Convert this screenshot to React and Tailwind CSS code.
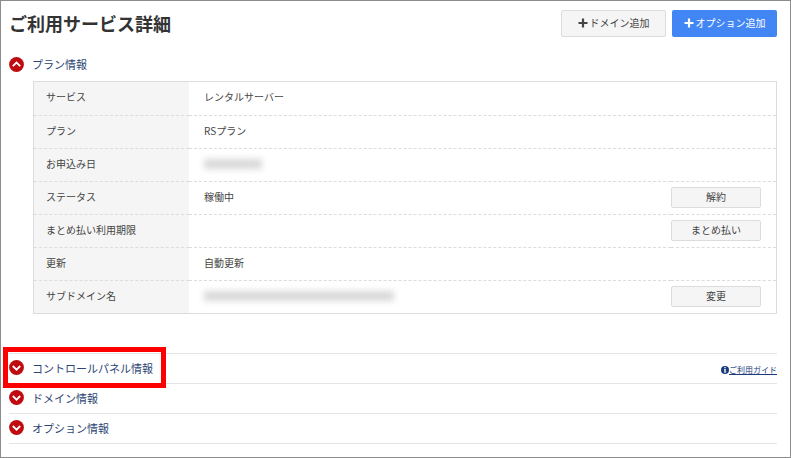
import React from "react";

const planRows = [
  { label: "サービス", value: "レンタルサーバー" },
  { label: "プラン", value: "RSプラン" },
  { label: "お申込み日", masked: "date" },
  { label: "ステータス", value: "稼働中", action: "解約" },
  { label: "まとめ払い利用期限", value: "", action: "まとめ払い" },
  { label: "更新", value: "自動更新" },
  { label: "サブドメイン名", masked: "domain", action: "変更" },
];

const ChevronBadge = ({ open }) => (
  <svg viewBox="0 0 15 15" className="w-[15px] h-[15px] shrink-0" aria-hidden="true">
    <circle cx="7.5" cy="7.5" r="7.4" fill="#bf0a10" />
    <path
      d={open ? "M3.8 9.2 7.5 5.5l3.7 3.7" : "M3.8 6 7.5 9.7 11.2 6"}
      fill="none"
      stroke="#fff"
      strokeWidth="1.8"
    />
  </svg>
);

const PlusIcon = () => (
  <svg viewBox="0 0 10 10" className="w-[10px] h-[10px] shrink-0" aria-hidden="true">
    <path d="M5 .5v9M.5 5h9" stroke="currentColor" strokeWidth="2.2" />
  </svg>
);

const InfoIcon = () => (
  <svg viewBox="0 0 8 8" className="w-2 h-2 shrink-0" aria-hidden="true">
    <circle cx="4" cy="4" r="4" fill="#1b3a7a" />
    <path d="M3.4 1.1h1.3v1.1H3.4zM3 3h1.7v2.8h.5v.8H2.9v-.8h.5v-2H3z" fill="#fff" />
  </svg>
);

const SectionToggle = ({ title, open = false }) => (
  <button
    type="button"
    aria-expanded={open}
    className="flex items-center gap-2 text-[11px] leading-4 text-[#2c4474] cursor-pointer"
  >
    <ChevronBadge open={open} />
    {title}
  </button>
);

// Private values are shown as a smudge
const MaskedValue = ({ kind }) => (
  <div
    className={
      kind === "date"
        ? "w-[58px] h-[10px] bg-[#d9d9d9] blur-[3px]"
        : "w-[190px] h-[10px] bg-[#d9d9d9] blur-[3px]"
    }
  />
);

const App = () => {
  return (
    <div className="min-h-screen border border-[#8c8c8c] bg-white pl-2 pr-[13px] pt-[9px] pb-[13px] text-[10px] leading-4 text-[#444] font-['Noto_Sans_CJK_JP','Liberation_Sans',sans-serif]">
      <header className="flex items-center justify-between">
        <h1 className="text-[18px] leading-[27px] font-bold text-[#333]">
          ご利用サービス詳細
        </h1>
        <div className="flex gap-[6px]">
          <button
            type="button"
            className="flex items-center justify-center gap-[2px] w-[105px] h-[27px] pb-[2px] rounded-xs border border-[#dcdcdc] bg-[#f5f5f5] cursor-pointer"
          >
            <PlusIcon />
            ドメイン追加
          </button>
          <button
            type="button"
            className="flex items-center justify-center gap-[2px] w-[105px] h-[27px] pb-[2px] rounded-xs bg-[#4285f4] text-white cursor-pointer"
          >
            <PlusIcon />
            オプション追加
          </button>
        </div>
      </header>

      <section className="mt-[19px]">
        <h2>
          <SectionToggle title="プラン情報" open />
        </h2>
        <div className="mt-[9px] ml-6 border border-[#dcdcdc]">
          <table className="w-full border-collapse">
            <tbody>
              {planRows.map((row) => (
                <tr
                  key={row.label}
                  className="h-[33px] border-b border-dashed border-[#dcdcdc] last:border-b-0"
                >
                  <th
                    scope="row"
                    className="w-[155px] pl-3 pt-0 pb-[2px] text-left font-normal bg-[#f5f5f5]"
                  >
                    {row.label}
                  </th>
                  <td className="pl-[15px] pt-0 pb-[2px]">
                    {row.masked ? <MaskedValue kind={row.masked} /> : row.value}
                  </td>
                  <td className="w-[105px] pr-[15px] py-0">
                    {row.action && (
                      <button
                        type="button"
                        className="block w-full h-[21px] pb-[2px] rounded-xs border border-[#dcdcdc] bg-[#f5f5f5] cursor-pointer"
                      >
                        {row.action}
                      </button>
                    )}
                  </td>
                </tr>
              ))}
            </tbody>
          </table>
        </div>
      </section>

      <div className="mt-[39px] border-b border-[#e4e4e4]">
        <section className="relative flex items-center justify-between h-[30px] pb-[2px] border-t border-[#e4e4e4]">
          <h2>
            <SectionToggle title="コントロールパネル情報" />
          </h2>
          <a
            href="#guide"
            className="flex items-center mt-1 text-[8px] leading-3 text-[#1b3a7a]"
          >
            <InfoIcon />
            <span className="underline underline-offset-1">ご利用ガイド</span>
          </a>
          <div className="absolute -left-[6px] -top-[7px] w-[163px] h-[41px] border-5 border-[#ff0000] pointer-events-none" />
        </section>
        <section className="flex items-center h-[30px] pb-[2px] border-t border-[#e4e4e4]">
          <h2>
            <SectionToggle title="ドメイン情報" />
          </h2>
        </section>
        <section className="flex items-center h-[30px] pb-[2px] border-t border-[#e4e4e4]">
          <h2>
            <SectionToggle title="オプション情報" />
          </h2>
        </section>
      </div>
    </div>
  );
};

export default App;
